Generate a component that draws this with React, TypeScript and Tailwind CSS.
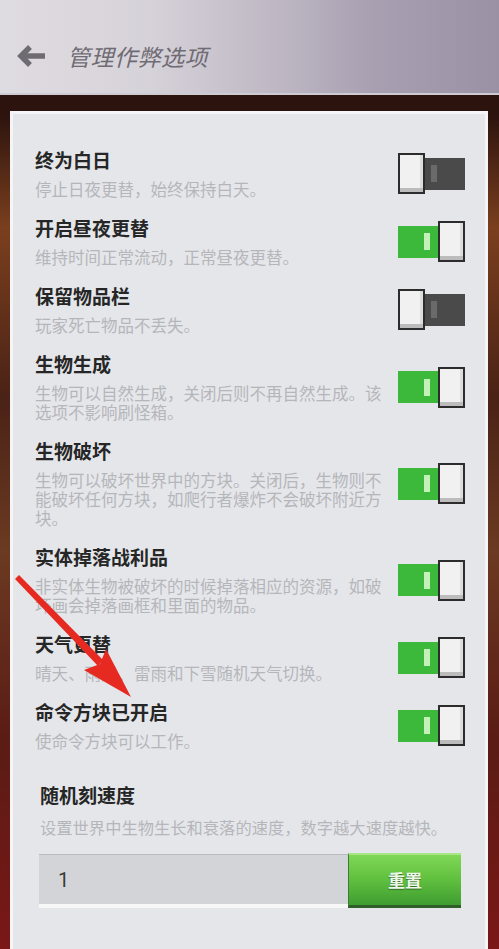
const rows = [
  { title: "终为白日", desc: ["停止日夜更替，始终保持白天。"], on: false },
  { title: "开启昼夜更替", desc: ["维持时间正常流动，正常昼夜更替。"], on: true },
  { title: "保留物品栏", desc: ["玩家死亡物品不丢失。"], on: false },
  {
    title: "生物生成",
    desc: ["生物可以自然生成，关闭后则不再自然生成。该", "选项不影响刷怪箱。"],
    on: true,
  },
  {
    title: "生物破坏",
    desc: [
      "生物可以破坏世界中的方块。关闭后，生物则不",
      "能破坏任何方块，如爬行者爆炸不会破坏附近方",
      "块。",
    ],
    on: true,
  },
  {
    title: "实体掉落战利品",
    desc: ["非实体生物被破坏的时候掉落相应的资源，如破", "坏画会掉落画框和里面的物品。"],
    on: true,
  },
  { title: "天气更替", desc: ["晴天、雨天、雷雨和下雪随机天气切换。"], on: true },
  { title: "命令方块已开启", desc: ["使命令方块可以工作。"], on: true },
];

function Knob() {
  return (
    <div className="w-[27px] h-[41px] border-2 border-[#2c2c2c] bg-[#f1f1f1] shadow-[inset_0_-4px_0_#bcbcbc,inset_-3px_0_0_#dcdcdc] shrink-0" />
  );
}

function Toggle({ on }: { on: boolean }) {
  if (on) {
    return (
      <div className="flex items-center shrink-0">
        <div className="w-[40px] h-[32px] bg-[#3cb83a] flex items-center justify-end pr-[8px]">
          <div className="w-[6px] h-[17px] bg-[#c3f1b9]" />
        </div>
        <Knob />
      </div>
    );
  }
  return (
    <div className="flex items-center shrink-0">
      <Knob />
      <div className="w-[40px] h-[32px] bg-[#4a4a4a] flex items-center pl-[6px]">
        <div className="w-[6px] h-[17px] bg-[#6a6a6a]" />
      </div>
    </div>
  );
}

export default function App() {
  return (
    <div className="relative w-[499px] h-[949px] overflow-hidden font-['Noto_Sans_CJK_SC','Noto_Sans',sans-serif] bg-[linear-gradient(180deg,#2c130e_12%,#7a3f1e_24%,#4a2216_42%,#6b3a22_58%,#5a1c15_78%,#7a1717_100%)]">
      <header className="h-[95px] pt-[19px] flex items-center gap-[21px] pl-[15px] bg-[linear-gradient(90deg,#dfdce1_0%,#d6d2d9_30%,#bfb8c4_55%,#a89fb1_75%,#9b91a5_100%)] border-b-2 border-[#cfcbd3]">
        <svg width="31" height="24" viewBox="0 0 31 24" fill="none" stroke="#6e6b72" strokeWidth={5.5}>
          <path d="M30 12H6" />
          <path d="M15 3L6 12L15 21" strokeLinejoin="miter" />
        </svg>
        <h1 className="text-[23px] italic text-[#6f6b73] leading-none tracking-[0.5px]">管理作弊选项</h1>
      </header>

      <div className="h-[16px]" />

      <div className="ml-[10px] mr-[11px] border-[3px] border-[#f5f5f7] bg-[#e5e6ea] pt-[34px] pl-[22px] pr-[20px] pb-[60px]">
        <div className="flex flex-col gap-[17px]">
          {rows.map((r) => (
            <div key={r.title} className="flex items-center justify-between">
              <div className="flex flex-col">
                <div className="text-[19px] leading-[24px] font-bold text-[#262626]">{r.title}</div>
                <div className="mt-[8px] text-[16.5px] leading-[19px] text-[#b5b6ba]">
                  {r.desc.map((d) => (
                    <div key={d} className="whitespace-nowrap">
                      {d}
                    </div>
                  ))}
                </div>
              </div>
              <Toggle on={r.on} />
            </div>
          ))}
        </div>

        <div className="mt-[32px] pl-[4px] pr-[4px]">
          <div className="pl-[1px] text-[19px] leading-[24px] font-bold text-[#262626]">随机刻速度</div>
          <div className="pl-[1px] mt-[11px] text-[16.3px] leading-[19px] text-[#b5b6ba] whitespace-nowrap">
            设置世界中生物生长和衰落的速度，数字越大速度越快。
          </div>
          <div className="mt-[17px] flex">
            <div className="w-[309px] h-[54px] bg-[#d2d4d7] border-t border-[#b8babd] border-b-4 border-b-[#f7f7f8] flex items-center pl-[19px] text-[20px] text-[#3a3a3a] font-['Roboto',sans-serif]">
              1
            </div>
            <button className="w-[113px] h-[55px] -mt-[1px] bg-[linear-gradient(180deg,#80d756_0%,#62c240_45%,#3f9d31_100%)] border-t-2 border-t-[#a8e585] border-b-[3px] border-b-[#2d5f26] border-l border-l-[#3d7a34] flex items-center justify-center text-[17px] font-bold text-[#eef8e8] [text-shadow:0_1px_1px_#2e6b25]">
              重置
            </button>
          </div>
        </div>
      </div>

      <svg className="absolute inset-0 pointer-events-none" width="499" height="949" viewBox="0 0 499 949">
        <polygon points="15,579 19,575 103,660 98,666" fill="#e62a22" />
        <polygon points="131,697 84,670 100,664 106,649" fill="#e62a22" />
      </svg>
    </div>
  );
}
